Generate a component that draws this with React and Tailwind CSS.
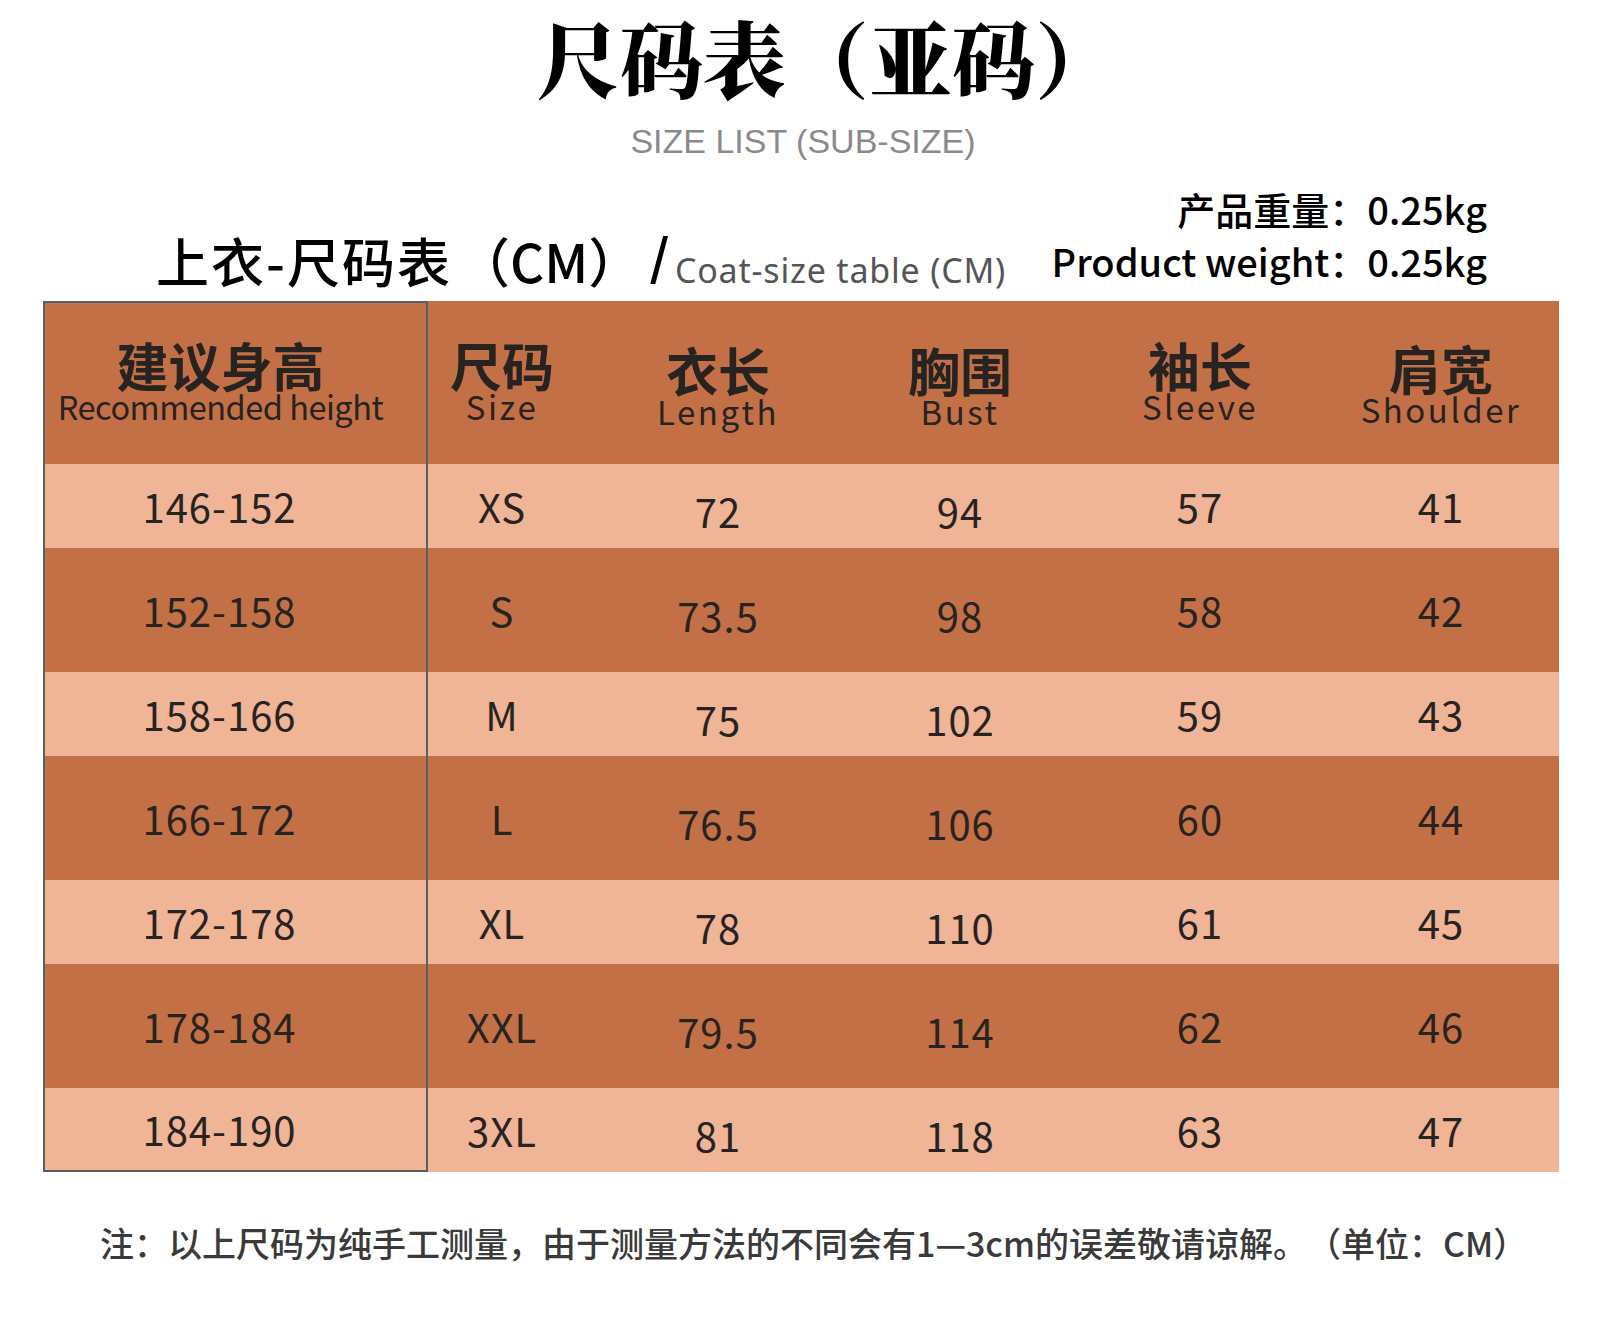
import React from 'react';

const cjk = { fontFamily: '"Noto Sans CJK SC", "Noto Sans", sans-serif' };

// headLow / cellLow: small downward nudges seen in the reference
const columns = [
  { zh: '建议身高', en: 'Recommended height', tight: true },
  { zh: '尺码', en: 'Size' },
  { zh: '衣长', en: 'Length', headLow: 'pt-[46px]', cellLow: true },
  { zh: '胸围', en: 'Bust', headLow: 'pt-[46px]', cellLow: true },
  { zh: '袖长', en: 'Sleeve' },
  { zh: '肩宽', en: 'Shoulder', headLow: 'pt-[44px]' },
];

const rows = [
  ['146-152', 'XS', '72', '94', '57', '41'],
  ['152-158', 'S', '73.5', '98', '58', '42'],
  ['158-166', 'M', '75', '102', '59', '43'],
  ['166-172', 'L', '76.5', '106', '60', '44'],
  ['172-178', 'XL', '78', '110', '61', '45'],
  ['178-184', 'XXL', '79.5', '114', '62', '46'],
  ['184-190', '3XL', '81', '118', '63', '47'],
];

const grid = 'grid grid-cols-[385px_148px_284px_200px_280px_219px]';

const App = () => {
  return (
    <div className="w-[1600px] h-[1343px] bg-white text-[#1a1a1a] [text-spacing-trim:space-all]" style={cjk}>
      {/* Title */}
      <h1
        className="pt-[3px] pl-[55px] text-center text-[83px] font-black leading-[1.3] whitespace-nowrap text-black"
        style={{ fontFamily: '"Noto Serif CJK SC", "Noto Sans CJK SC", serif' }}
      >
        尺码表（亚码）
      </h1>
      <p
        className="mt-[13px] pl-[6px] text-center text-[34px] leading-none text-[#8a8a8a]"
        style={{ fontFamily: '"Liberation Sans", Arial, sans-serif' }}
      >
        SIZE LIST (SUB-SIZE)
      </p>

      {/* Table caption + weight */}
      <div className="mt-[25px] flex items-end justify-between pl-[156px] pr-[113px]">
        <div className="flex items-baseline leading-[52px]">
          <span className="text-[53px] font-medium text-black">
            <span className="tracking-[2px]">上衣-尺码表</span>
            <span className="ml-[5px]">（CM）</span>
          </span>
          <span
            className="ml-[9px] text-[64px] text-black"
            style={{ fontFamily: '"Liberation Sans", sans-serif' }}
          >
            /
          </span>
          <span
            className="ml-[7px] text-[34px] tracking-[0.8px] text-[#555]"
            style={{ fontFamily: '"Noto Sans", sans-serif' }}
          >
            Coat-size table (CM)
          </span>
        </div>
        <div className="mb-[9px] text-right text-[38px] font-medium leading-[52px] text-black">
          <div>产品重量：0.25kg</div>
          <div>Product weight：0.25kg</div>
        </div>
      </div>

      {/* Size table */}
      <div className="ml-[43px] mt-[5px] w-[1516px] text-[#272320]">
        <div className={`${grid} h-[163px] bg-[#c37047]`}>
          {columns.map((c, i) => (
            <div
              key={c.zh}
              className={`flex flex-col items-center ${
                i === 0
                  ? 'border-2 border-b-0 border-[#52625e] pt-[39px] pr-[30px]'
                  : c.headLow || 'pt-[41px]'
              } ${i === 5 ? 'pr-[17px]' : ''}`}
            >
              <span className="text-[52px] font-bold leading-[46px]">{c.zh}</span>
              <span
                className={`mt-[3px] leading-[30px] ${c.tight ? 'text-[32.5px] tracking-[-0.5px]' : 'text-[33px] tracking-[2.5px]'}`}
              >
                {c.en}
              </span>
            </div>
          ))}
        </div>

        {rows.map((r, ri) => {
          const light = ri % 2 === 0;
          return (
            <div
              key={r[0]}
              className={`${grid} ${light ? 'h-[84px] bg-[#f0b497]' : 'h-[124px] bg-[#c37047]'}`}
            >
              {r.map((v, ci) => (
                <div
                  key={ci}
                  className={`flex items-center justify-center text-[40px] leading-none tracking-[1px] ${
                    ci === 0
                      ? `border-x-2 border-[#52625e] pr-[32px] ${ri === rows.length - 1 ? 'border-b-2' : ''}`
                      : ''
                  } ${columns[ci].cellLow ? 'pt-[10px]' : ''} ${ci === 5 ? 'pr-[17px]' : ''}`}
                >
                  {v}
                </div>
              ))}
            </div>
          );
        })}
      </div>

      {/* Note */}
      <p className="mt-[54px] pl-[100px] text-[34px] font-medium leading-none text-[#3a3a3a]">
        注：以上尺码为纯手工测量，由于测量方法的不同会有1—3cm的误差敬请谅解。（单位：CM）
      </p>
    </div>
  );
};

export default App;
